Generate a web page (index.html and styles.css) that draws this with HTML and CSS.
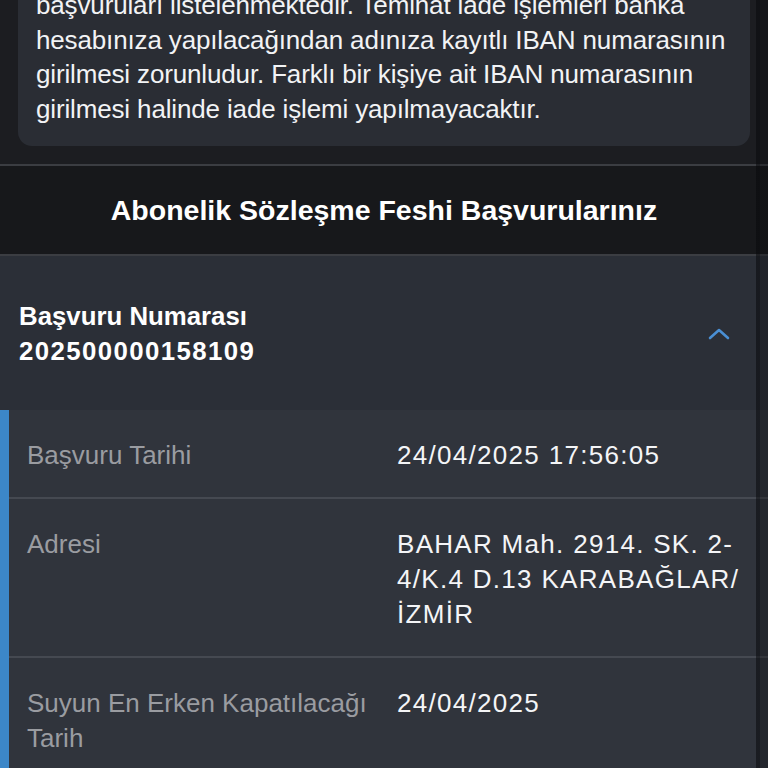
FILE: index.html
```html
<!DOCTYPE html>
<html lang="tr">
<head>
    <meta charset="UTF-8">
    <meta name="viewport" content="width=device-width, initial-scale=1.0">
    <title>Abonelik Sözleşme Feshi Başvurularınız</title>
    <link rel="stylesheet" href="styles.css">
</head>
<body>
    <div class="page">
        <div class="info-wrap">
            <div class="info-card">
                <p>başvuruları listelenmektedir. Teminat iade işlemleri banka hesabınıza yapılacağından adınıza kayıtlı IBAN numarasının girilmesi zorunludur. Farklı bir kişiye ait IBAN numarasının girilmesi halinde iade işlemi yapılmayacaktır.</p>
            </div>
        </div>

        <div class="section-title">
            <h2>Abonelik Sözleşme Feshi Başvurularınız</h2>
        </div>

        <div class="application">
            <div class="application-head">
                <div class="application-no">
                    <span>Başvuru Numarası</span>
                    <span class="number">202500000158109</span>
                </div>
                <svg class="chevron" width="24" height="14" viewBox="0 0 24 14">
                    <path d="M3 11 L12 3 L21 11" fill="none" stroke="#4a8fd3" stroke-width="2.6" stroke-linecap="round" stroke-linejoin="round"/>
                </svg>
            </div>

            <div class="details">
                <div class="detail-row">
                    <div class="detail-label">Başvuru Tarihi</div>
                    <div class="detail-value">24/04/2025 17:56:05</div>
                </div>
                <div class="detail-row">
                    <div class="detail-label">Adresi</div>
                    <div class="detail-value">BAHAR Mah. 2914. SK. 2-4/K.4 D.13 KARABAĞLAR/ İZMİR</div>
                </div>
                <div class="detail-row">
                    <div class="detail-label">Suyun En Erken Kapatılacağı Tarih</div>
                    <div class="detail-value">24/04/2025</div>
                </div>
            </div>
        </div>

        <!-- scroll track on the right edge -->
        <div class="scroll-track"></div>
    </div>
</body>
</html>
```

FILE: styles.css
```css
* {
    margin: 0;
    padding: 0;
    box-sizing: border-box;
}

body {
    font-family: 'Liberation Sans', Arial, sans-serif;
    background: #1c1d21;
    color: #f4f5f7;
    width: 768px;
    height: 768px;
    overflow: hidden;
}

.page {
    position: relative;
    width: 768px;
    min-height: 768px;
}

.info-wrap {
    padding: 0 18px 18px;
    border-bottom: 2px solid #3b3d42;
}

.info-card {
    margin-top: -30px;
    background: #2a2d34;
    border-radius: 14px;
    padding: 18px 14px 20px 18px;
}

.info-card p {
    font-size: 26px;
    line-height: 34.6px;
    letter-spacing: -0.15px;
    color: #f2f3f5;
}

.section-title {
    background: #17181b;
    height: 90px;
    display: flex;
    align-items: center;
    justify-content: center;
    border-bottom: 2px solid #3b3d42;
}

.section-title h2 {
    font-size: 28.5px;
    font-weight: 700;
    color: #ffffff;
}

.application {
    background: #2b2f37;
}

.application-head {
    display: flex;
    align-items: center;
    justify-content: space-between;
    height: 154px;
    padding: 2px 37px 0 19px;
}

.application-no {
    display: flex;
    flex-direction: column;
    font-size: 25.8px;
    font-weight: 700;
    line-height: 35px;
    color: #ffffff;
}

.application-no .number {
    letter-spacing: 1.4px;
}

.details {
    background: #30343c;
    border-left: 9px solid #3c87c8;
}

.detail-row {
    display: flex;
    padding: 28px 12px 24px 18px;
    font-size: 26px;
    line-height: 35px;
    border-bottom: 2px solid #454951;
}

.detail-label {
    width: 370px;
    flex-shrink: 0;
    padding-right: 10px;
    color: #9a9ca1;
}

.detail-value {
    flex: 1;
    color: #f4f5f7;
    letter-spacing: 1.3px;
}

.scroll-track {
    position: absolute;
    top: 0;
    right: 0;
    width: 12px;
    height: 100%;
    background: linear-gradient(to right, rgba(8, 9, 12, 0.55) 0 4px, rgba(8, 9, 12, 0.3) 4px);
}
```
